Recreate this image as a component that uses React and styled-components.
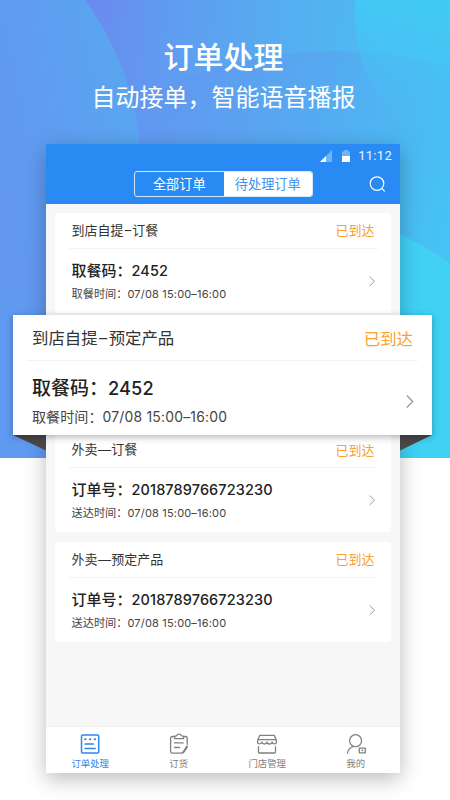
import React from "react";
import styled, { createGlobalStyle, css } from "styled-components";

const Global = createGlobalStyle`
  * { box-sizing: border-box; }
  body { margin: 0; background: #fff; }
`;

const Page = styled.main`
  position: relative;
  width: 450px;
  height: 800px;
  overflow: hidden;
  background: #fff;
  font-family: "Noto Sans CJK SC", sans-serif;
  display: flex;
  flex-direction: column;
  align-items: center;
`;

const Backdrop = styled.svg`
  position: absolute;
  left: 0;
  top: 0;
`;

const Hero = styled.header`
  position: relative;
  height: 144px;
  flex: none;
  padding-top: 34px;
  color: #fff;
  text-align: center;
`;

const HeroTitle = styled.h1`
  margin: 0;
  font-size: 30px;
  line-height: 42px;
  font-weight: 500;
  padding-right: 3px;
`;

const HeroSubtitle = styled.p`
  margin: 0;
  font-size: 24px;
  line-height: 39px;
  font-weight: 400;
  padding-right: 3px;
`;

const Phone = styled.section`
  position: relative;
  width: 354px;
  height: 629px;
  flex: none;
  margin-right: 4px;
  display: flex;
  flex-direction: column;
  background: #f7f7f7;
  box-shadow: 0 6px 20px rgba(0, 0, 0, 0.27);
`;

const TopBar = styled.div`
  height: 60px;
  flex: none;
  background: #288af2;
  color: #fff;
`;

const StatusBar = styled.div`
  height: 26px;
  display: flex;
  align-items: center;
  justify-content: flex-end;
  padding: 0 8px 2px 0;
`;

const Clock = styled.span`
  font: 400 13px/18px Roboto, sans-serif;
  letter-spacing: 0.3px;
  color: #eef6ff;
  margin-left: 7px;
`;

const NavBar = styled.div`
  height: 34px;
  display: grid;
  grid-template-columns: 88px 179px 1fr;
  align-items: start;
`;

const Segments = styled.div`
  grid-column: 2;
  height: 26px;
  margin-top: 1px;
  border: 1px solid #cfeaff;
  border-radius: 3px;
  display: grid;
  grid-template-columns: 1fr 1fr;
  overflow: hidden;
`;

const Segment = styled.div`
  font-size: 13.2px;
  line-height: 23px;
  text-align: center;
  color: ${(p) => (p.$active ? "#3f92ee" : "#fff")};
  background: ${(p) => (p.$active ? "#fff" : "transparent")};
`;

const SearchSlot = styled.div`
  display: flex;
  justify-content: flex-end;
  padding: 6px 14px 0 0;
`;

const OrderList = styled.div`
  flex: 1;
  display: flex;
  flex-direction: column;
  gap: 9.6px;
  padding: 9px 9px 0;
`;

const small = css`
  --inset: 13.5px;
  --pad: 3px;
  --head: 36px;
  --title: 13px;
  --code: 15px;
  --digits: 14.5px;
  --codeLine: 24px;
  --time: 11.2px;
  --timeDigits: 11px;
  --timeLine: 21px;
  --bodyTop: 9px;
  height: 100px;
  border-radius: 3px;
`;

const large = css`
  --inset: 14px;
  --pad: 5px;
  --head: 46px;
  --title: 16.4px;
  --code: 19px;
  --digits: 18.2px;
  --codeLine: 30px;
  --time: 14.1px;
  --timeDigits: 13.9px;
  --timeLine: 26px;
  --bodyTop: 11px;
  height: 120px;
`;

const Card = styled.article`
  ${(p) => (p.$large ? large : small)}
  flex: none;
  background: #fff;
  padding: 0 var(--inset);
  color: #333;
`;

const CardHead = styled.div`
  height: var(--head);
  padding: ${(p) => (p.$large ? "1px" : "0")} var(--pad) 0;
  border-bottom: 1px solid #f3f3f3;
  display: flex;
  justify-content: space-between;
  align-items: center;
  font-size: var(--title);
  line-height: 1.4;
  white-space: nowrap;
`;

const Dash = styled.span`
  display: inline-block;
  width: ${(p) => (p.$wide ? "1.06em" : "0.68em")};
  text-align: center;
  font-family: ${(p) => (p.$wide ? '"Liberation Sans"' : "Inter")}, sans-serif;
`;

const State = styled.span`
  color: #f9a02f;
`;

const CardBody = styled.div`
  padding: var(--bodyTop) calc(var(--pad) - 1px) 0 var(--pad);
  display: flex;
  justify-content: space-between;
  align-items: center;
`;

const Code = styled.div`
  font-size: var(--code);
  line-height: var(--codeLine);
  font-weight: 500;
  color: #222;
  white-space: nowrap;
`;

const Time = styled.div`
  font-size: var(--time);
  line-height: var(--timeLine);
  color: #444;
  white-space: nowrap;
`;

const Digits = styled.span`
  font-family: Inter, sans-serif;
  font-size: var(--digits);
  font-weight: 450;
  letter-spacing: 0.1px;
`;

const TimeDigits = styled.span`
  font-family: Inter, sans-serif;
  font-size: var(--timeDigits);
  letter-spacing: 0.016em;
`;

const Slot = styled.div`
  position: relative;
  height: 100px;
  flex: none;
  z-index: 2;
`;

const Highlight = styled.div`
  position: absolute;
  left: -42px;
  top: -7.6px;
  width: 419px;
`;

const HighlightShadow = styled.div`
  position: relative;
  box-shadow: 0 2px 7px rgba(0, 0, 0, 0.3);
`;

const Folds = styled.svg`
  position: absolute;
  left: 0;
  top: 120px;
  display: block;
`;

const TabBar = styled.nav`
  height: 47px;
  flex: none;
  background: #fff;
  border-top: 1px solid #f1f1f1;
  display: grid;
  grid-template-columns: repeat(4, 1fr);
`;

const Tab = styled.div`
  display: flex;
  flex-direction: column;
  align-items: center;
  padding-top: 6px;
  font-size: 9.4px;
  line-height: 14px;
  color: ${(p) => (p.$active ? "#2f86ee" : "#808080")};
  svg { display: block; margin-bottom: 1px; }
`;

const stroke = { fill: "none", stroke: "currentColor", strokeWidth: 1.3, strokeLinecap: "round", strokeLinejoin: "round" };

const OrdersIcon = () => (
  <svg width="22" height="22" viewBox="0 0 22 22" {...stroke} strokeWidth="1.5">
    <rect x="2.500" y="2" width="17.2" height="18" rx="1" />
    <path d="M6.100 6.200h.4M10.900 6.200h.4M15.700 6.200h.4" strokeWidth="2" />
    <path d="M6 11h8.300M6 15.600h10.200" />
  </svg>
);

const ClipboardIcon = () => (
  <svg width="22" height="22" viewBox="0 0 22 22" {...stroke}>
    <path d="M6.600 3.500H4.200a1.600 1.600 0 0 0-1.600 1.600v13.400a1.600 1.600 0 0 0 1.600 1.600h9.200M15.600 3.500h2a1.600 1.600 0 0 1 1.600 1.600v6.200" />
    <path d="M6.600 5.600V3.300l2.200-.6c.5-2.200 4-2.200 4.500 0l2.300.6v2.300z" />
    <path d="M6.600 9.900h8.600M6.600 14.500h5" />
    <path d="M19 13.600l-3.200 5.100-1.300 1" strokeWidth="2" />
  </svg>
);

const StoreIcon = () => (
  <svg width="22" height="22" viewBox="0 0 22 22" {...stroke}>
    <path d="M3.800 2.300h14.400l2.200 5.100v1.800a1.700 1.700 0 0 1-1.700 1.700c-1.700 0-2.500-.8-2.600-1.900-.2 1.300-1.100 2-2.500 2s-2.400-.7-2.600-2c-.2 1.300-1.100 2-2.500 2s-2.300-.7-2.500-2c-.2 1.200-1.100 1.900-2.700 1.900a1.700 1.700 0 0 1-1.700-1.700V7.400z" />
    <path d="M2.100 6.700h17.800M2.500 13.700v5.200a1.100 1.100 0 0 0 1.100 1.100h14.800a1.100 1.100 0 0 0 1.100-1.100v-5.200" />
  </svg>
);

const UserIcon = () => (
  <svg width="22" height="22" viewBox="0 0 22 22" {...stroke}>
    <circle cx="10.600" cy="7.700" r="6" />
    <path d="M8.300 13.400c-3.400 1.200-5.200 3.400-5.800 6.700" />
    <path d="M14.300 15.200h6v4.600h-6z" />
    <path d="M17.100 17.200h.4v.4h-.4z" />
  </svg>
);

const Chevron = ({ size }) => (
  <svg width={size * 0.6} height={size} viewBox="0 0 6 10" fill="none" stroke="#999" strokeWidth="0.95">
    <path d="M.6.4 5.200 5 .6 9.600" />
  </svg>
);

const ChevronSlot = styled.div`
  display: flex;
`;

function OrderCard({ kind, wideDash, item, codeLabel, code, timeLabel, isLarge }) {
  return (
    <Card $large={isLarge}>
      <CardHead $large={isLarge}>
        <span>{kind}<Dash $wide={wideDash}>{wideDash ? "—" : "–"}</Dash>{item}</span>
        <State>已到达</State>
      </CardHead>
      <CardBody>
        <div>
          <Code>{codeLabel}：<Digits>{code}</Digits></Code>
          <Time>{timeLabel}：<TimeDigits>07/08 15:00–16:00</TimeDigits></Time>
        </div>
        <ChevronSlot><Chevron size={isLarge ? 13 : 10.5} /></ChevronSlot>
      </CardBody>
    </Card>
  );
}

const pickup = { kind: "到店自提", codeLabel: "取餐码", code: "2452", timeLabel: "取餐时间" };
const delivery = { kind: "外卖", wideDash: true, codeLabel: "订单号", code: "2018789766723230", timeLabel: "送达时间" };

const tabs = [
  { label: "订单处理", Icon: OrdersIcon, active: true },
  { label: "订货", Icon: ClipboardIcon },
  { label: "门店管理", Icon: StoreIcon },
  { label: "我的", Icon: UserIcon },
];

const HeroArt = () => (
  <Backdrop width="450" height="458" viewBox="0 0 450 458">
    <defs>
      <linearGradient id="base" gradientUnits="userSpaceOnUse" x1="90" y1="20" x2="450" y2="50">
        <stop offset="0" stopColor="#6b8aef" />
        <stop offset="0.18" stopColor="#6199f0" />
        <stop offset="0.6" stopColor="#54b1f1" />
        <stop offset="1" stopColor="#48c3f3" />
      </linearGradient>
      <linearGradient id="left" gradientUnits="userSpaceOnUse" x1="0" y1="130" x2="140" y2="100">
        <stop offset="0" stopColor="#6298f0" />
        <stop offset="1" stopColor="#59a6f0" />
      </linearGradient>
      <linearGradient id="wide" gradientUnits="userSpaceOnUse" x1="140" y1="90" x2="450" y2="200">
        <stop offset="0" stopColor="#6396f0" />
        <stop offset="0.5" stopColor="#56a9f1" />
        <stop offset="1" stopColor="#46c2f4" />
      </linearGradient>
      <linearGradient id="corner" gradientUnits="userSpaceOnUse" x1="430" y1="0" x2="410" y2="145">
        <stop offset="0" stopColor="#40ccf4" stopOpacity="0.9" />
        <stop offset="1" stopColor="#48bff3" stopOpacity="0" />
      </linearGradient>
    </defs>
    <rect width="450" height="458" fill="url(#base)" />
    <circle cx="335" cy="481" r="430" fill="url(#wide)" />
    <circle cx="505" cy="15" r="150" fill="url(#corner)" />
    <circle cx="-144" cy="170" r="285" fill="url(#left)" />
    <path d="M0 300h225v158H0z" fill="#6099f0" />
    <circle cx="277" cy="508" r="300" fill="#40d1f5" clipPath="inset(0 0 0 225px)" />
    <path d="M225 300h225v158H225z" fill="#40d1f5" />
  </Backdrop>
);

export default function App() {
  return (
    <Page lang="zh-CN">
      <Global />
      <HeroArt />
      <Hero>
        <HeroTitle>订单处理</HeroTitle>
        <HeroSubtitle>自动接单，智能语音播报</HeroSubtitle>
      </Hero>
      <Phone>
        <TopBar>
          <StatusBar>
            <svg width="32" height="14" viewBox="0 0 32 14">
              <path d="M13 1v12H1z" fill="#71b3f7" />
              <path d="M7 7v6H1z" fill="#fff" />
              <path d="M25 1h4v1.500h2V7h-8V2.500h2z" fill="#71b3f7" />
              <path d="M23 7h8v6h-8z" fill="#fff" />
            </svg>
            <Clock>11:12</Clock>
          </StatusBar>
          <NavBar>
            <Segments>
              <Segment>全部订单</Segment>
              <Segment $active>待处理订单</Segment>
            </Segments>
            <SearchSlot>
              <svg width="17" height="17" viewBox="0 0 17 17" fill="none" stroke="#fff" strokeWidth="1.2" strokeLinecap="round">
                <circle cx="8" cy="7.600" r="6.800" />
                <path d="M12.900 12.600l2.500 2.500" />
              </svg>
            </SearchSlot>
          </NavBar>
        </TopBar>
        <OrderList>
          <OrderCard {...pickup} item="订餐" />
          <Slot>
            <Highlight>
              <Folds width="419" height="16" viewBox="0 0 419 16">
                <path d="M0 0h33v15.500zM387 0h32l-32 15.500z" fill="#484848" />
              </Folds>
              <HighlightShadow>
                <OrderCard {...pickup} item="预定产品" isLarge />
              </HighlightShadow>
            </Highlight>
          </Slot>
          <OrderCard {...delivery} item="订餐" />
          <OrderCard {...delivery} item="预定产品" />
        </OrderList>
        <TabBar>
          {tabs.map(({ label, Icon, active }) => (
            <Tab key={label} $active={active}>
              <Icon />
              {label}
            </Tab>
          ))}
        </TabBar>
      </Phone>
    </Page>
  );
}
